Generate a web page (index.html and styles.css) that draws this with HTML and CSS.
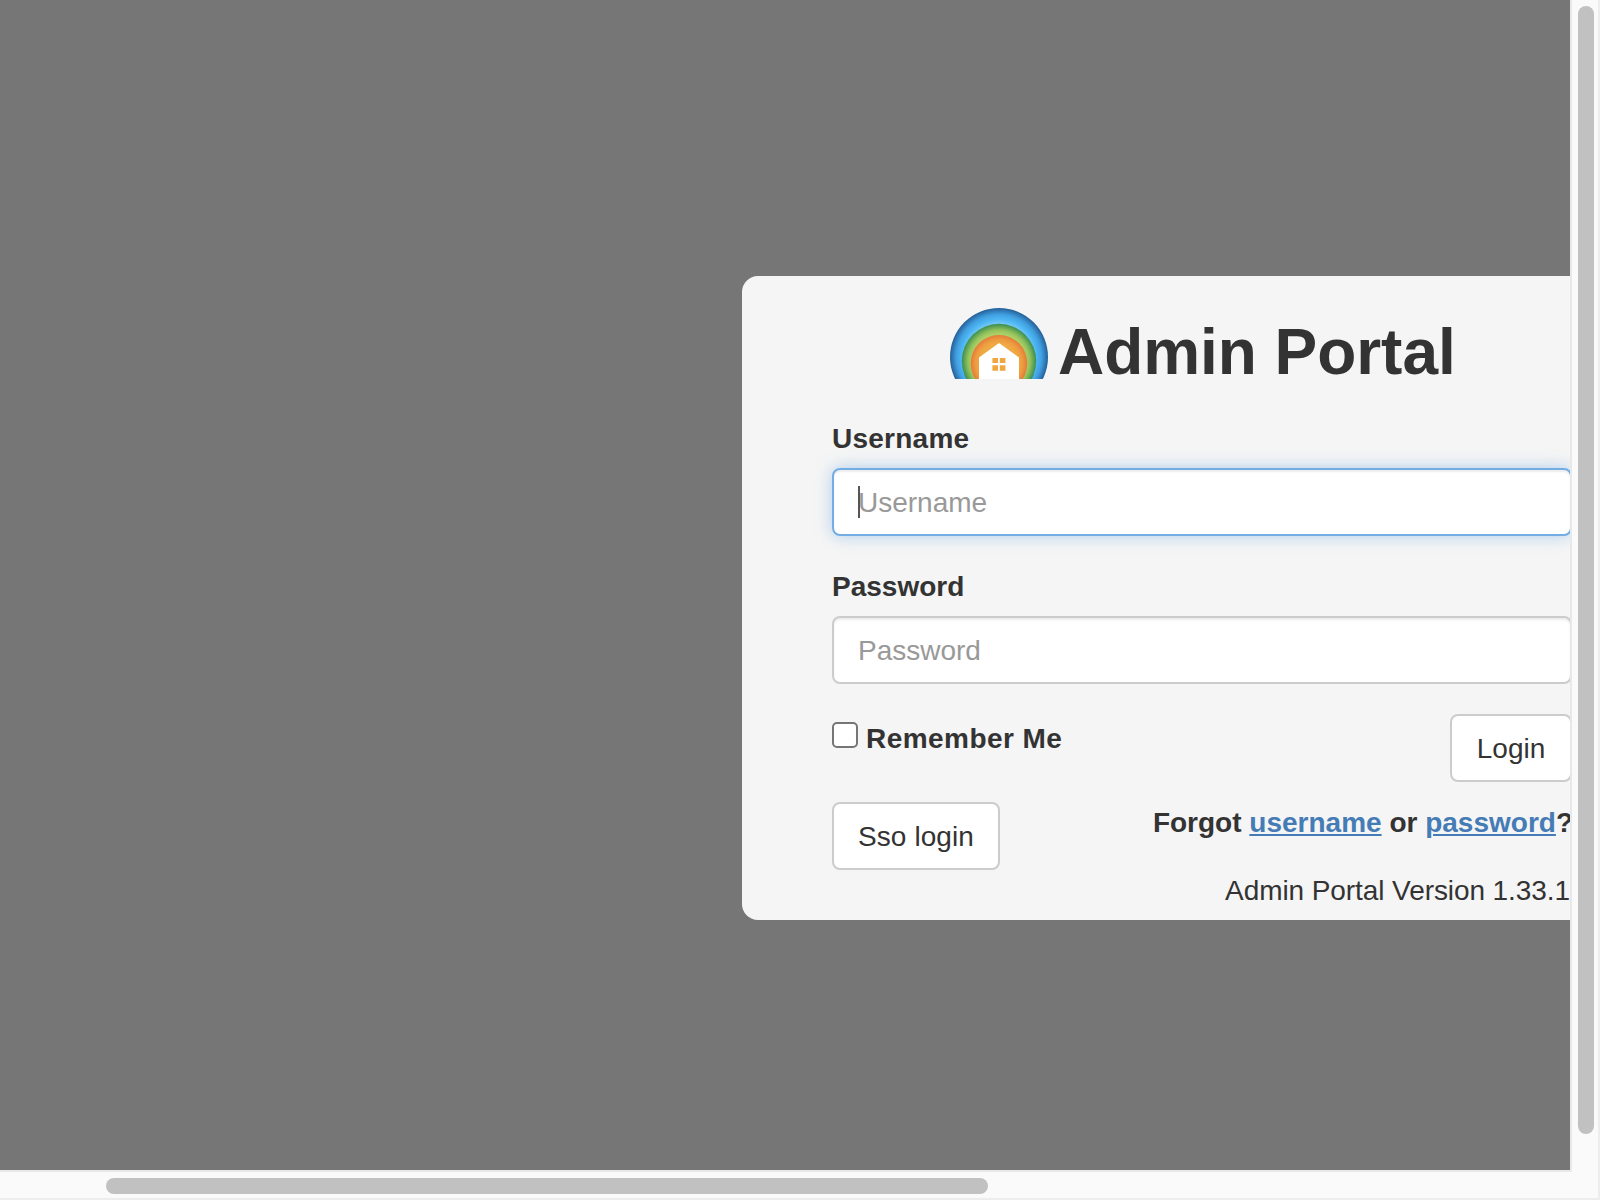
FILE: index.html
```html
<!DOCTYPE html>
<html lang="en">
<head>
<meta charset="utf-8">
<title>Admin Portal</title>
<link rel="stylesheet" href="styles.css">
</head>
<body>
<div class="window">
  <main class="viewport">
    <section class="card">
      <header class="brand">
        <svg class="brand-logo" viewBox="0 0 98 71" width="98" height="71" aria-hidden="true">
          <defs>
            <radialGradient id="sky" gradientUnits="userSpaceOnUse" cx="49" cy="49" r="49">
              <stop offset=".68" stop-color="#74c8f6"/>
              <stop offset=".77" stop-color="#4db6f3"/>
              <stop offset=".87" stop-color="#419fe0"/>
              <stop offset="1" stop-color="#245f98"/>
            </radialGradient>
            <radialGradient id="grass" gradientUnits="userSpaceOnUse" cx="49" cy="53" r="37.2">
              <stop offset=".74" stop-color="#abcf66"/>
              <stop offset=".84" stop-color="#8fc05c"/>
              <stop offset="1" stop-color="#3a8d50"/>
            </radialGradient>
            <radialGradient id="sun" gradientUnits="userSpaceOnUse" cx="49" cy="55.3" r="28.3">
              <stop offset=".68" stop-color="#f0aa42"/>
              <stop offset=".84" stop-color="#ed9b3f"/>
              <stop offset="1" stop-color="#e57a39"/>
            </radialGradient>
          </defs>
          <circle cx="49" cy="49" r="49" fill="url(#sky)"/>
          <circle cx="49" cy="53" r="37.2" fill="url(#grass)"/>
          <circle cx="49" cy="55.3" r="28.3" fill="url(#sun)"/>
          <path d="M49 35 69 49.5V71H29V49.5Z" fill="#fff"/>
          <path d="M42.4 50h5.6v5h-5.6zM49.8 50h5.6v5h-5.6zM42.4 57.2h5.6v5.6h-5.6zM49.8 57.2h5.6v5.6h-5.6z" fill="#f0a73f"/>
        </svg>
        <h1 class="brand-title">Admin Portal</h1>
      </header>
      <form class="form">
        <div class="field">
          <label class="label label-username" for="username">Username</label>
          <div class="control">
            <input class="input input-active" id="username" type="text" placeholder="Username">
            <span class="caret"></span>
          </div>
        </div>
        <div class="field">
          <label class="label" for="password">Password</label>
          <input class="input" id="password" type="password" placeholder="Password">
        </div>
        <div class="row row-login">
          <label class="remember"><input class="checkbox" type="checkbox"><span>Remember Me</span></label>
          <button class="button button-login" type="button">Login</button>
        </div>
        <div class="row">
          <button class="button button-sso" type="button">Sso login</button>
          <p class="forgot">Forgot <a class="link" href="#">username</a> or <a class="link" href="#">password</a>?</p>
        </div>
        <p class="version">Admin Portal Version 1.33.1</p>
      </form>
    </section>
  </main>
  <div class="track track-y"><div class="thumb thumb-y"></div></div>
  <div class="track track-x"><div class="thumb thumb-x"></div></div>
  <div class="corner"></div>
</div>
</body>
</html>
```
FILE: styles.css
```css
* { box-sizing: border-box; }

body {
  margin: 0;
  overflow: hidden;
  color: #333;
  font: 28px/40px "Liberation Sans", Arial, sans-serif;
}

h1, p { margin: 0; }

.window {
  display: grid;
  grid-template: 1170px 30px / 1570px 30px;
  width: 1600px;
  height: 1200px;
}

.viewport {
  overflow: hidden;
  padding: 276px 0 0 742px;
  background: #767676;
}

.card {
  width: 920px;
  height: 644px;
  padding: 32px 90px 9px;
  border-radius: 16px;
  background: #f5f5f5;
}

.brand {
  display: flex;
  gap: 10px;
  height: 110px;
  padding-left: 118px;
}

.brand-logo { display: block; flex: none; }

.brand-title {
  padding-top: 9px;
  font-size: 64px;
  line-height: 70px;
  letter-spacing: -.05px;
  white-space: nowrap;
}

.field { margin-bottom: 30px; }

.label {
  display: block;
  height: 50px;
  padding-top: 1px;
  font-weight: bold;
}

.label-username { letter-spacing: .25px; }

.control { position: relative; }

.input {
  display: block;
  width: 100%;
  height: 68px;
  padding: 13px 24px 11px;
  border: 2px solid #ccc;
  border-radius: 8px;
  background: #fff;
  box-shadow: inset 0 2px 2px rgba(0, 0, 0, .075);
  color: #555;
  font: inherit;
}

.input::placeholder { color: #999; opacity: 1; }

.input-active {
  border-color: #73ade3;
  box-shadow: inset 0 2px 2px rgba(0, 0, 0, .075), 0 0 16px rgba(115, 173, 227, .55);
}

.caret {
  position: absolute;
  top: 18px;
  left: 26px;
  width: 2px;
  height: 32px;
  background: #555;
}

.row {
  display: flex;
  justify-content: space-between;
  align-items: flex-start;
}

.row-login { margin-bottom: 20px; }

.remember {
  display: flex;
  gap: 8px;
  padding-top: 5px;
  font-weight: bold;
  letter-spacing: .45px;
}

.checkbox {
  appearance: none;
  width: 26px;
  height: 26px;
  margin: 3px 0 0;
  border: 2px solid #767676;
  border-radius: 5px;
  background: #fff;
}

.button {
  height: 68px;
  padding: 13px 24px 11px;
  border: 2px solid #ccc;
  border-radius: 8px;
  background: #fff;
  color: #333;
  font: inherit;
}

.button-login { width: 122px; padding-inline: 0; }
.button-sso { width: 168px; padding-inline: 0; letter-spacing: .1px; }

.forgot {
  padding-top: 1px;
  font-weight: bold;
  margin-right: -1px;
}

.link {
  color: #467cb5;
  text-decoration: underline;
  text-decoration-thickness: 2px;
  text-underline-offset: 2px;
}

.version {
  padding: 1px 2px 0 0;
  letter-spacing: -.08px;
  text-align: right;
}

.track { background: #fafafa; }

.track-y {
  padding: 6px 4px 0 6px;
  border-left: 2px solid #e8e8e8;
  border-right: 2px solid #ededed;
}

.track-x {
  grid-row: 2;
  padding: 6px 0 0 106px;
  border-top: 2px solid #e8e8e8;
  border-bottom: 2px solid #ededed;
}

.thumb { border-radius: 8px; background: #c1c1c1; }
.thumb-y { width: 16px; height: 1128px; }
.thumb-x { width: 882px; height: 16px; }

.corner {
  border-right: 2px solid #ededed;
  border-bottom: 2px solid #ededed;
  background: linear-gradient(#e8e8e8, #e8e8e8) 0 0 / 2px 2px no-repeat #fafafa;
}
```
